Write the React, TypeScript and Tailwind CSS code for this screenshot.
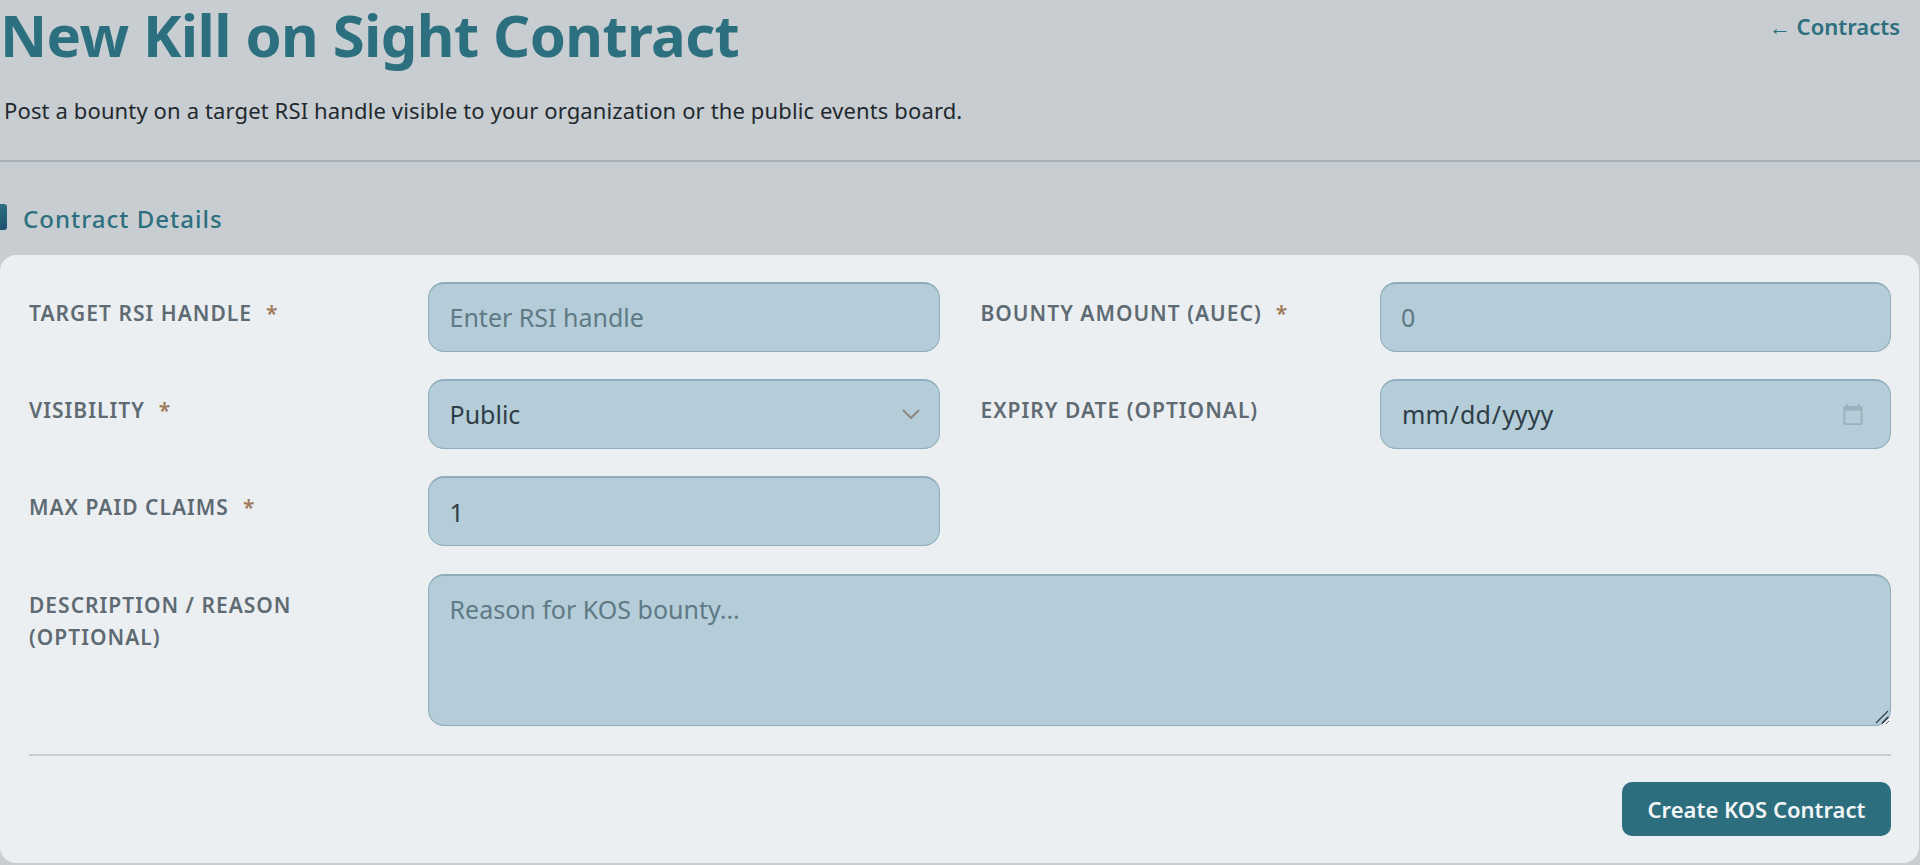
const font = "font-['Noto_Sans',sans-serif]";

const fieldClass =
  "w-full rounded-[16px] border-[1.5px] border-t-2 border-[#8fadbb] bg-[#b4cdd9] px-[20.5px] text-[25px] text-[#2f3e46] outline-none placeholder:text-[#5f7a85]";

const labelClass =
  "w-[399px] shrink-0 pt-[15px] text-[21px] leading-[32px] font-semibold tracking-[1px] text-[#5f6b73] uppercase";

function Label({ text, required }: { text: string; required?: boolean }) {
  return (
    <label className={`${labelClass} pr-[50px]`}>
      {text}
      {required && <span className="ml-[14px] text-[#a07a5a]">*</span>}
    </label>
  );
}

export default function App() {
  return (
    <div className={`${font} h-[865px] overflow-hidden bg-[#c8cdd1]`}>
      {/* Header */}
      <div className="flex h-[162px] items-start justify-between border-b-2 border-[#a9b0b5] pr-5">
        <div>
          <h1 className="pt-[3px] text-[58px] leading-[64px] font-bold tracking-[-0.6px] text-[#2c6f7f]">
            New Kill on Sight Contract
          </h1>
          <p className="pt-[27px] pl-1 text-[22px] leading-[32px] tracking-[0.13px] text-[#22292e]">
            Post a bounty on a target RSI handle visible to your organization or the public events board.
          </p>
        </div>
        <a className="pt-[10px] text-[22px] leading-[32px] font-semibold text-[#2c6f7f]">
          ← Contracts
        </a>
      </div>

      {/* Section title */}
      <div className="flex h-[93px] items-start pt-[42px]">
        <span className="h-[26px] w-[7px] rounded-r-[3px] bg-gradient-to-b from-[#2c6f7f] to-[#1f4f6f]" />
        <h2 className="ml-[16px] text-[24px] leading-[30px] font-medium tracking-[1px] text-[#2c6f7f]">
          Contract Details
        </h2>
      </div>

      {/* Form card */}
      <div className="mr-px h-[608px] rounded-[16px] bg-[#ebeff2] pt-[27px] pr-[28px] pl-[29px]">
        <div className="grid grid-cols-2 gap-x-[41px] gap-y-[27px]">
          <div className="flex">
            <Label text="Target RSI Handle" required />
            <input className={`${fieldClass} h-[70px] pb-[1px]`} placeholder="Enter RSI handle" />
          </div>
          <div className="flex">
            <Label text="Bounty Amount (aUEC)" required />
            <input className={`${fieldClass} h-[70px] pb-[1px]`} placeholder="0" />
          </div>
          <div className="flex">
            <Label text="Visibility" required />
            <div className="relative w-full">
              <select className={`${fieldClass} h-[70px] appearance-none`} defaultValue="Public">
                <option>Public</option>
                <option>Organization</option>
              </select>
              <svg
                className="absolute top-[29px] right-[19px]"
                width="20"
                height="12"
                viewBox="0 0 20 12"
                fill="none"
                stroke="#8f8a80"
                strokeWidth="2"
              >
                <path d="M2 2l8 8 8-8" />
              </svg>
            </div>
          </div>
          <div className="flex">
            <Label text="Expiry Date (Optional)" />
            <input
              type="date"
              className={`${fieldClass} h-[70px] [&::-webkit-calendar-picker-indicator]:mr-[3px] [&::-webkit-calendar-picker-indicator]:h-[24px] [&::-webkit-calendar-picker-indicator]:w-[24px] [&::-webkit-calendar-picker-indicator]:opacity-[0.13]`}
            />
          </div>
          <div className="flex">
            <Label text="Max Paid Claims" required />
            <input className={`${fieldClass} h-[70px]`} defaultValue="1" />
          </div>
          <div />
        </div>

        <div className="mt-[28px] flex">
          <label className={`${labelClass} pr-[100px]`}>Description / Reason (Optional)</label>
          <div className="relative w-full">
            <textarea
              className={`${fieldClass} block h-[152px] py-[17px] leading-[32px]`}
              placeholder="Reason for KOS bounty..."
            />
            <svg
              className="pointer-events-none absolute right-[2px] bottom-[2px]"
              width="14"
              height="14"
              viewBox="0 0 14 14"
              fill="none"
              stroke="#2f3e46"
              strokeWidth="1.2"
            >
              <path d="M1 13L13 1M7 13l6-6" />
            </svg>
          </div>
        </div>

        <div className="mt-[28px] flex justify-end border-t-2 border-[#c8cdd1] pt-[26px]">
          <button className="h-[54px] w-[269px] rounded-[10px] bg-[#2c6e7e] text-[22px] font-semibold text-[#f2f5f6]">
            Create KOS Contract
          </button>
        </div>
      </div>
    </div>
  );
}
